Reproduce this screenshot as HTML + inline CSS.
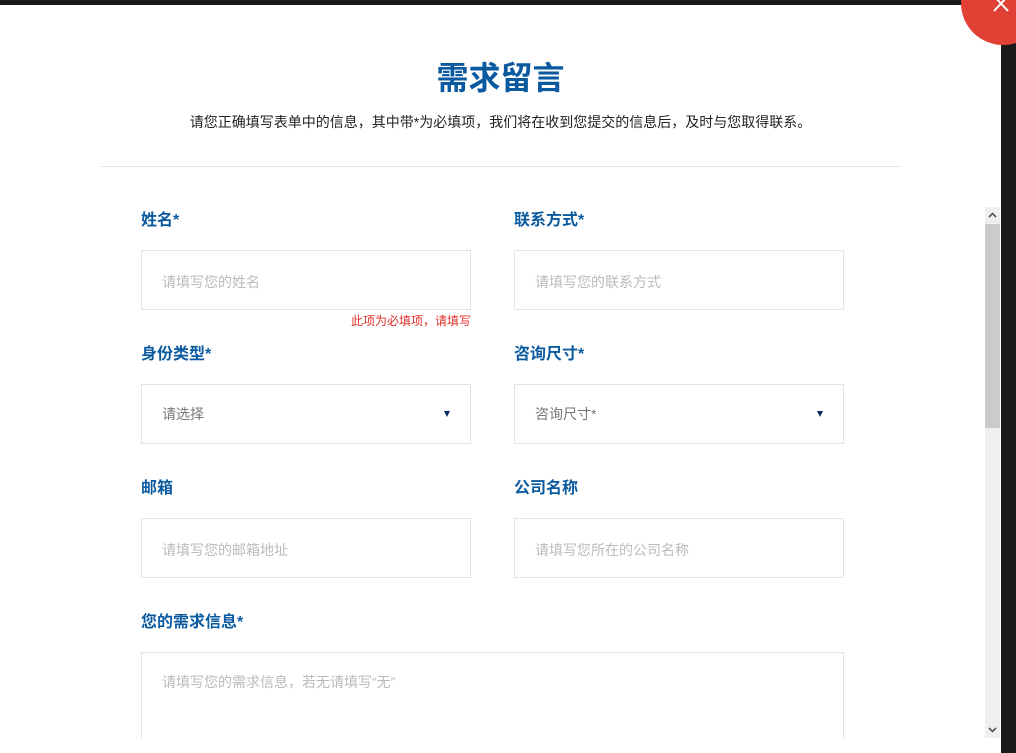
<!DOCTYPE html>
<html><head><meta charset="utf-8"><style>
*{margin:0;padding:0;box-sizing:border-box}
body{width:1016px;height:753px;overflow:hidden;background:#1a1a1a;font-family:"Liberation Sans","Noto Sans CJK SC",sans-serif;position:relative}
.modal{position:absolute;left:0;top:5px;width:1001px;height:748px;background:#fff;overflow:hidden}
.clip{position:absolute;left:0;top:0;width:1001px;height:733px;overflow:hidden}
.t{position:absolute;top:51px;left:0;width:1001px;text-align:center;font-size:32px;font-weight:bold;color:#0b5aa0;line-height:44px}
.s{position:absolute;top:107px;left:0;width:1001px;text-align:center;font-size:14px;color:#222;line-height:20px}
.hr{position:absolute;top:161px;left:101px;width:800px;height:1px;background:#e3e3e3}
.l{position:absolute;font-size:16px;font-weight:bold;color:#0b5aa0;line-height:20px}
.i{position:absolute;width:330px;height:60px;border:1px solid #e3e3e3;font-size:14px;color:#bbb;padding-left:20px;line-height:62px}
.i.sel{color:#777;line-height:58px}
.i.sel:after{content:"";position:absolute;right:20px;top:26px;border-left:3.5px solid transparent;border-right:3.5px solid transparent;border-top:6px solid #0b2a60}
.err{position:absolute;left:351px;top:307px;font-size:12px;color:#e0302a}
.sb{position:absolute;left:985px;top:202px;width:15px;height:531px;background:#efefef}
.th{position:absolute;left:0;top:17px;width:15px;height:204px;background:#cbcbcb}
.close{position:absolute;left:961px;top:-39px;width:84px;height:84px;border-radius:50%;background:#e04134}
</style></head><body>
<div class="modal"><div class="clip">
<div class="t">需求留言</div>
<div class="s">请您正确填写表单中的信息，其中带*为必填项，我们将在收到您提交的信息后，及时与您取得联系。</div>
<div class="hr"></div>
<div class="l" style="left:141px;top:206px">姓名*</div>
<div class="l" style="left:514px;top:206px">联系方式*</div>
<div class="i" style="left:141px;top:245px">请填写您的姓名</div>
<div class="i" style="left:514px;top:245px">请填写您的联系方式</div>
<div class="err">此项为必填项，请填写</div>
<div class="l" style="left:141px;top:340px">身份类型*</div>
<div class="l" style="left:514px;top:340px">咨询尺寸*</div>
<div class="i sel" style="left:141px;top:379px">请选择</div>
<div class="i sel" style="left:514px;top:379px">咨询尺寸*</div>
<div class="l" style="left:141px;top:474px">邮箱</div>
<div class="l" style="left:514px;top:474px">公司名称</div>
<div class="i" style="left:141px;top:513px">请填写您的邮箱地址</div>
<div class="i" style="left:514px;top:513px">请填写您所在的公司名称</div>
<div class="l" style="left:141px;top:608px">您的需求信息*</div>
<div class="i" style="left:141px;top:647px;width:703px;height:120px;line-height:58px">请填写您的需求信息，若无请填写“无”</div>
</div>
<div class="sb"><div class="th"></div>
<svg style="position:absolute;left:3px;top:5px" width="9" height="6"><path d="M1 5L4.5 1.5L8 5" stroke="#555" stroke-width="1.6" fill="none"/></svg>
<svg style="position:absolute;left:3px;top:520px" width="9" height="6"><path d="M1 1L4.5 4.5L8 1" stroke="#555" stroke-width="1.6" fill="none"/></svg>
</div>
</div>
<div class="close"></div>
<svg style="position:absolute;left:992px;top:0" width="20" height="14"><path d="M2 -4L16 11M16 -4L2 11" stroke="#fff" stroke-width="2"/></svg>
</body></html>
